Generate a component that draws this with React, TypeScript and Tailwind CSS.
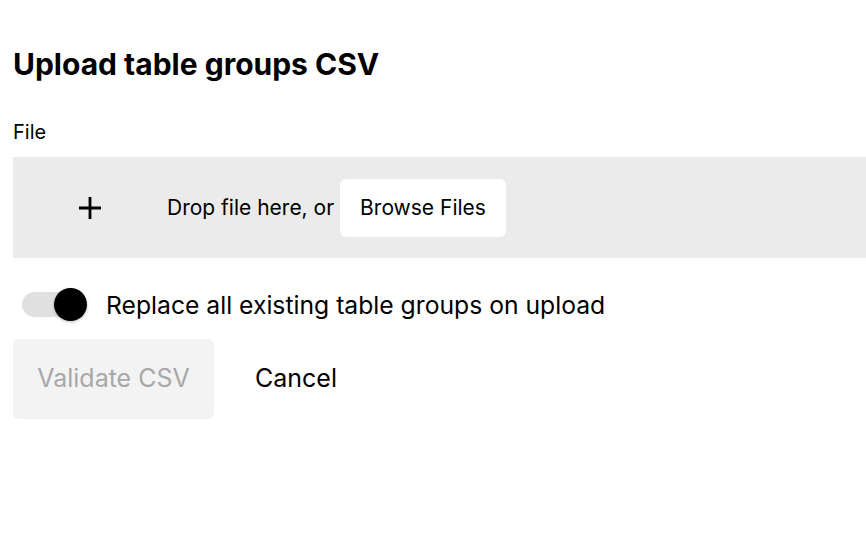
import React from "react";

export default function App() {
  return (
    <div className="min-h-screen bg-white pl-[13px] pt-[44px] font-['Inter',sans-serif] text-black">
      <h1 className="text-[30px] leading-[40px] font-bold">Upload table groups CSV</h1>
      <div className="mt-[36px] text-[20px] leading-[24px]">File</div>
      <div className="mt-[13px] h-[101px] bg-[#ebebeb] flex items-center">
        <div className="w-[154px] flex justify-center">
          <svg width="22" height="22" viewBox="0 0 22 22" fill="none" stroke="black" strokeWidth="2.8">
            <path d="M11 0v22M0 11h22" />
          </svg>
        </div>
        <span className="text-[21px] leading-[24px]">Drop file here, or</span>
        <button className="ml-[6px] h-[58px] px-[20px] bg-white rounded-[6px] text-[21px] leading-[24px]">Browse Files</button>
      </div>
      <div className="mt-[30px] flex items-center h-[33px]">
        <div className="ml-[9px] relative w-[65px] h-[33px] flex items-center">
          <div className="w-[60px] h-[25px] rounded-full bg-[#e0e0e0]" />
          <div className="absolute right-0 top-0 w-[33px] h-[33px] rounded-full bg-black shadow-[0_1px_3px_rgba(0,0,0,0.25)]" />
        </div>
        <span className="ml-[19px] text-[24.7px] leading-[32px]">Replace all existing table groups on upload</span>
      </div>
      <div className="mt-[18px] flex items-center">
        <button className="w-[201px] h-[80px] rounded-[6px] bg-[#f3f3f3] text-[#a8a8a8] text-[25px]">Validate CSV</button>
        <button className="ml-[41px] text-[25px]">Cancel</button>
      </div>
    </div>
  );
}
